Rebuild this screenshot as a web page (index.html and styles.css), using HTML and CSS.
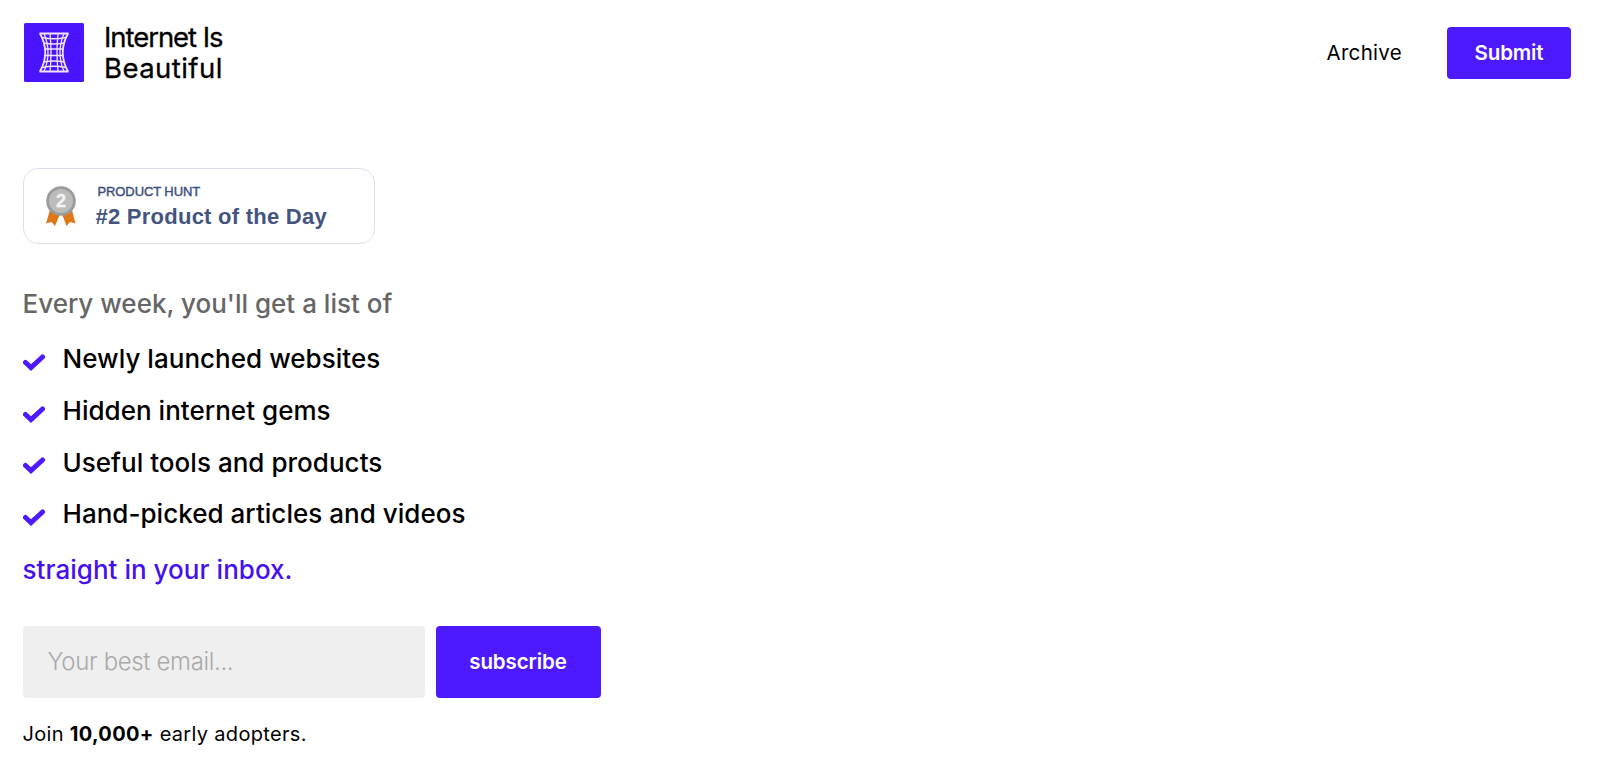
FILE: index.html
```html
<!DOCTYPE html>
<html lang="en">
<head>
    <meta charset="UTF-8">
    <meta name="viewport" content="width=device-width, initial-scale=1.0">
    <title>Internet Is Beautiful</title>
    <link rel="stylesheet" href="styles.css">
</head>
<body>
    <header class="header">
        <a class="brand" href="#">
            <svg class="logo" viewBox="0 0 60 59">
                <rect width="60" height="59" rx="1.5" fill="#4a14ff"/>
                <g fill="none" stroke="#eee4ff" stroke-width="1.3">
                    <path d="M15.5 10.5H44.5M15.5 48.5H44.5" stroke-width="1.8"/>
                    <path d="M16 10.5Q26.5 29.5 16 48.5M44 10.5Q33.5 29.5 44 48.5" stroke-width="1.8"/>
                    <path d="M20 10.5Q28 29.5 20 48.5M40 10.5Q32 29.5 40 48.5"/>
                    <path d="M26 10.5Q28 29.5 26 48.5M34 10.5Q32 29.5 34 48.5"/>
                    <path d="M18 14.5Q30 17 42 14.5M19.5 20Q30 22 40.5 20M20.5 26H39.5M20.5 32.5H39.5M19.5 39Q30 37 40.5 39M18 44.5Q30 42 42 44.5"/>
                </g>
            </svg>
            <span class="brand-name">
                <span class="line-one">Internet Is</span>
                <span class="line-two">Beautiful</span>
            </span>
        </a>
        <nav class="nav">
            <a class="nav-link" href="#">Archive</a>
            <a class="submit" href="#">Submit</a>
        </nav>
    </header>

    <main class="main">
        <a class="badge" href="#">
            <svg class="medal" viewBox="0 0 30 40">
                <path d="M4 24L0 37.5L5.5 36L9 40L14 28ZM26 24L29.5 37.5L24 36L20.5 40L16 28Z" fill="#de7818"/>
                <circle cx="15" cy="15" r="14.8" fill="#9b9b9b"/>
                <circle cx="15" cy="15" r="12" fill="#bcbcbc"/>
                <text x="15" y="21" text-anchor="middle">2</text>
            </svg>
            <span class="badge-text">
                <span class="badge-label">PRODUCT HUNT</span>
                <span class="badge-title">#2 Product of the Day</span>
            </span>
        </a>

        <p class="intro">Every week, you'll get a list of</p>
        <ul class="list">
            <li><svg class="check" viewBox="0 0 22 17"><path d="M2.5 8.5L8 13.5L19.5 3"/></svg>Newly launched websites</li>
            <li><svg class="check" viewBox="0 0 22 17"><path d="M2.5 8.5L8 13.5L19.5 3"/></svg>Hidden internet gems</li>
            <li><svg class="check" viewBox="0 0 22 17"><path d="M2.5 8.5L8 13.5L19.5 3"/></svg>Useful tools and products</li>
            <li><svg class="check" viewBox="0 0 22 17"><path d="M2.5 8.5L8 13.5L19.5 3"/></svg>Hand-picked articles and videos</li>
        </ul>
        <p class="outro">straight in your inbox.</p>

        <form class="form">
            <input class="email" type="email" placeholder="Your best email...">
            <button class="subscribe" type="button">subscribe</button>
        </form>
        <p class="join">Join <b>10,000+</b> early adopters.</p>
    </main>
</body>
</html>
```

FILE: styles.css
```css
* {
    box-sizing: border-box;
}
body {
    margin: 0;
    background: #fff;
    color: #000;
    font-family: Inter, sans-serif;
}
a {
    color: inherit;
    text-decoration: none;
}
p, ul {
    margin: 0;
    padding: 0;
}
.header {
    display: flex;
    justify-content: space-between;
    align-items: center;
    height: 105px;
    padding: 0 29px 0 24px;
}
.brand {
    display: flex;
    align-items: center;
    gap: 20px;
}
.logo {
    width: 60px;
    height: 59px;
}
.brand-name {
    padding-top: 1px;
    font-size: 27.5px;
    line-height: 31px;
    -webkit-text-stroke: 0.3px #000;
}
.brand-name span {
    display: block;
}
.line-one {
    letter-spacing: -1.05px;
}
.line-two {
    letter-spacing: 0.45px;
}
.nav {
    display: flex;
    align-items: center;
    gap: 45px;
    font-size: 20.5px;
}
.nav-link {
    letter-spacing: 0.3px;
}
.submit {
    width: 124px;
    height: 52px;
    border-radius: 4px;
    background: #4d1aff;
    color: #fff;
    font-weight: 600;
    letter-spacing: -0.15px;
    line-height: 51px;
    text-align: center;
}
.main {
    padding: 63px 22.5px 0;
}
.badge {
    display: flex;
    align-items: center;
    width: 352px;
    height: 76px;
    padding-left: 22.5px;
    border: 1px solid #dedfec;
    border-radius: 15px;
    font-family: "Liberation Sans", sans-serif;
    color: #43547f;
}
.medal {
    width: 30px;
    height: 40px;
    margin-right: 19.5px;
}
.medal text {
    fill: #f3f3f3;
    font-size: 18px;
    font-weight: bold;
    stroke: #f3f3f3;
    stroke-width: 0.4px;
}
.badge-text span {
    display: block;
}
.badge-label {
    padding-left: 2px;
    font-size: 13px;
    letter-spacing: -0.1px;
    line-height: 22px;
    -webkit-text-stroke: 0.4px #33477a;
}
.badge-title {
    font-size: 22px;
    font-weight: bold;
    letter-spacing: 0.25px;
    line-height: 28px;
}
.intro, .outro, .list {
    font-size: 26px;
    font-weight: 500;
    letter-spacing: 0.03px;
}
.intro {
    margin-top: 44px;
    color: #666;
    letter-spacing: 0;
    line-height: 32px;
}
.list {
    margin-top: 13px;
    list-style: none;
}
.list li {
    display: flex;
    align-items: center;
    height: 51.7px;
}
.check {
    width: 22px;
    height: 17px;
    margin: 7px 18px 0 0;
    fill: none;
    stroke: #4d1aff;
    stroke-width: 5;
    stroke-linecap: round;
}
.outro {
    margin-top: 14px;
    color: #4710ee;
    line-height: 32px;
}
.form {
    display: flex;
    gap: 11px;
    margin-top: 40px;
}
.email {
    width: 402px;
    height: 72px;
    padding: 0 25px;
    border: none;
    border-radius: 4px;
    background: #efefef;
    font-family: inherit;
    font-size: 24px;
    font-weight: 300;
    letter-spacing: -0.35px;
}
.email::placeholder {
    color: #a9a9a9;
}
.subscribe {
    width: 165px;
    height: 72px;
    border: none;
    border-radius: 4px;
    background: #4d1aff;
    color: #fff;
    font-family: inherit;
    font-size: 20.5px;
    font-weight: 600;
    letter-spacing: -0.1px;
}
.join {
    margin-top: 23px;
    font-size: 20px;
    letter-spacing: 0.32px;
    line-height: 26px;
}
```
